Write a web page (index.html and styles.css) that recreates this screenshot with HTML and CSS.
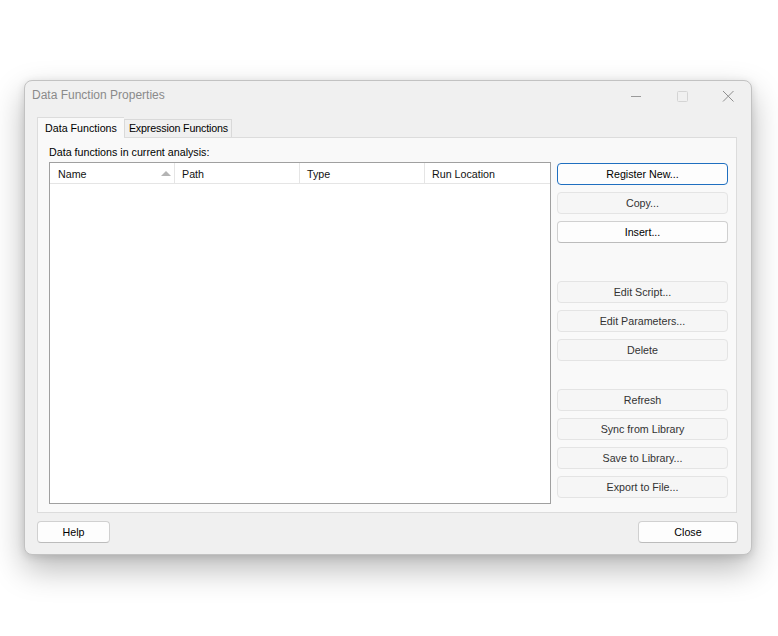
FILE: index.html
```html
<!DOCTYPE html>
<html lang="en">
<head>
  <meta charset="UTF-8" />
  <title>Data Function Properties</title>
  <link rel="stylesheet" href="styles.css">
</head>
<body>

  <div class="window">
    <div class="titlebar">
      <span class="title">Data Function Properties</span>
      <div class="controls">
        <span class="ctl">
          <svg width="12" height="12" viewBox="0 0 12 12"><path d="M1 6.5h10" stroke="#9a9a9a" stroke-width="1"/></svg>
        </span>
        <span class="ctl">
          <svg width="12" height="12" viewBox="0 0 12 12"><rect x="1.5" y="1.5" width="10" height="10" rx="1" fill="none" stroke="#d4d4d4" stroke-width="1"/></svg>
        </span>
        <span class="ctl">
          <svg width="12" height="12" viewBox="0 0 12 12"><path d="M1 1l10.5 10.5M11.5 1L1 11.5" stroke="#8e8e8e" stroke-width="1"/></svg>
        </span>
      </div>
    </div>

    <div class="client">
      <div class="tabs">
        <div class="tab active">Data Functions</div>
        <div class="tab">Expression Functions</div>
      </div>

      <div class="panel">
        <div class="list-area">
          <div class="label">Data functions in current analysis:</div>
          <div class="listview">
            <div class="lv-header">
              <div class="col col-name">Name <span class="sort"></span></div>
              <div class="col">Path</div>
              <div class="col">Type</div>
              <div class="col">Run Location</div>
            </div>
          </div>
        </div>

        <div class="side">
          <button class="btn default">Register New...</button>
          <button class="btn flat">Copy...</button>
          <button class="btn">Insert...</button>

          <button class="btn flat group">Edit Script...</button>
          <button class="btn flat">Edit Parameters...</button>
          <button class="btn flat">Delete</button>

          <button class="btn flat group2">Refresh</button>
          <button class="btn flat">Sync from Library</button>
          <button class="btn flat">Save to Library...</button>
          <button class="btn flat">Export to File...</button>
        </div>
      </div>

      <div class="footer">
        <button class="btn help">Help</button>
        <button class="btn close">Close</button>
      </div>
    </div>
  </div>

</body>
</html>
```

FILE: styles.css
```css
html {
  background: white;
}

body {
  margin: 0;
  min-height: 100vh;
  box-sizing: border-box;
  font-family: "Liberation Sans", Arial, sans-serif;
  font-size: 10.7px;
  color: #000;
  padding: 80px 0 0 24px;
}

.window {
  width: 726px;
  border: 1px solid #c2c2c2;
  border-radius: 8px;
  background: #f0f0f0;
  box-shadow: 0 14px 32px rgba(0,0,0,0.28), 0 2px 8px rgba(0,0,0,0.12);
}

/* title bar */
.titlebar {
  height: 30px;
  display: flex;
  align-items: center;
  justify-content: space-between;
  padding-left: 7px;
}

.title {
  font-size: 12px;
  color: #8a8a8a;
  padding-bottom: 2px;
}

.controls {
  display: flex;
  height: 30px;
}

.ctl {
  width: 46px;
  display: flex;
  align-items: center;
  justify-content: center;
}

/* client area */
.client {
  padding: 6px 12px 11px 12px;
}

.tabs {
  display: flex;
  align-items: flex-end;
  height: 20px;
}

.tab {
  height: 17px;
  line-height: 17px;
  padding: 0 3px 0 4px;
  letter-spacing: -0.15px;
  background: #f0f0f0;
  border: 1px solid #d9d9d9;
  border-bottom: none;
  color: #000;
}

.tab.active {
  height: 20px;
  line-height: 20px;
  padding: 0 7px;
  letter-spacing: 0;
  background: #f9f9f9;
  border-color: #dcdcdc;
  border-right: none;
  position: relative;
  z-index: 1;
  margin-bottom: -1px;
}

.panel {
  width: 698px;
  height: 374px;
  background: #f9f9f9;
  border: 1px solid #dcdcdc;
  display: flex;
}

.list-area {
  padding: 7px 0 0 11px;
  width: 502px;
}

.label {
  height: 14px;
  line-height: 14px;
  margin-bottom: 3px;
}

.listview {
  height: 340px;
  background: white;
  border: 1px solid #a0a0a0;
}

.lv-header {
  display: flex;
  height: 20px;
  border-bottom: 1px solid #e5e5e5;
}

.col {
  width: 125px;
  box-sizing: border-box;
  padding: 1px 0 0 7px;
  line-height: 20px;
  border-right: 1px solid #e5e5e5;
  color: #111;
}

.col:last-child {
  border-right: none;
}

.col-name {
  padding-left: 8px;
  position: relative;
}

.sort {
  position: absolute;
  left: 111px;
  top: 8px;
  width: 0;
  height: 0;
  border-left: 5px solid transparent;
  border-right: 5px solid transparent;
  border-bottom: 5px solid #b4b4b4;
}

/* buttons */
.side {
  margin-left: 6px;
  padding-top: 25px;
  width: 171px;
  display: flex;
  flex-direction: column;
  gap: 7px;
}

.btn {
  font-family: inherit;
  font-size: inherit;
  height: 22px;
  padding: 0;
  background: #fdfdfd;
  border: 1px solid #d0d0d0;
  border-bottom-color: #bcbcbc;
  border-radius: 4px;
  color: #000;
}

.btn.default {
  border: 1px solid #1f6fc0;
  box-shadow: inset 0 0 0 1px #fdfdfd;
}

.btn.flat {
  background: #f6f6f6;
  border: 1px solid #e4e4e4;
  color: #333;
}

.btn.group {
  margin-top: 31px;
}

.btn.group2 {
  margin-top: 21px;
}

.footer {
  width: 701px;
  margin-top: 8px;
  display: flex;
  justify-content: space-between;
}

.btn.help {
  width: 73px;
}

.btn.close {
  width: 100px;
}
```
